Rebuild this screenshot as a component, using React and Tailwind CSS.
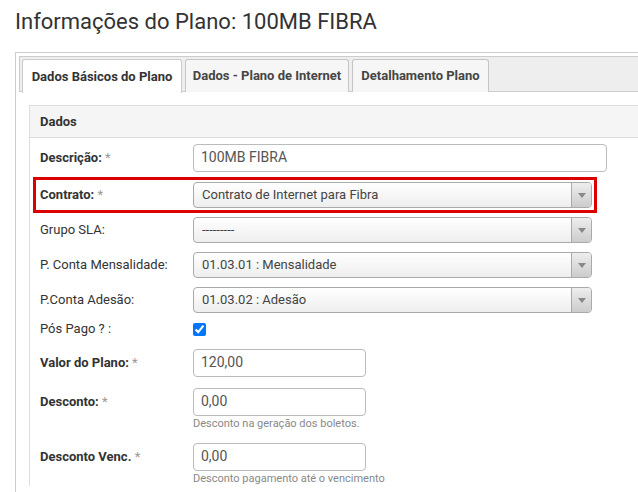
import React from "react";

function Label({ children, bold, req }) {
  return (
    <div className={`w-[153px] shrink-0 text-[13px] text-[#333] ${bold ? "font-bold" : ""}`}>
      {children}
      {req && <span className="font-normal text-[#999]"> *</span>}
    </div>
  );
}

function Select({ value }) {
  return (
    <div className="flex h-[26px] w-[399px] items-stretch overflow-hidden rounded-[4px] border border-[#aaa] bg-gradient-to-b from-white to-[#eee]">
      <div className="flex flex-1 items-center pl-[8px] text-[13px] text-[#444]">{value}</div>
      <div className="flex w-[20px] items-center justify-center border-l border-[#aaa] bg-gradient-to-b from-[#eee] to-[#ccc]">
        <svg width="8" height="5" viewBox="0 0 8 5"><path d="M0 0h8L4 5z" fill="#888" /></svg>
      </div>
    </div>
  );
}

function Input({ value, w }) {
  return (
    <div className={`flex h-[28px] ${w} items-center rounded-[4px] border border-[#bbb] bg-white pl-[7px] text-[14px] text-[#555]`}>
      {value}
    </div>
  );
}

export default function App() {
  return (
    <div className="h-[492px] w-[638px] overflow-hidden bg-white font-['Roboto',sans-serif]">
      <h1 className="pl-[15px] pt-[9px] text-[22px] leading-[26px] text-[#333]">
        Informações do Plano: 100MB FIBRA
      </h1>
      <div className="ml-[15px] mt-[17px] h-[500px] border-l border-t border-[#ccc] pl-[3px] pt-[3px]">
        <div className="flex h-[36px] gap-[3px] border-b border-l border-t border-[#ccc] bg-[#eee] pl-[2px] pt-[2px]">
          <div className="-mb-px flex h-[34px] w-[160px] items-center justify-center rounded-t-[3px] border border-b-0 border-[#ccc] bg-white text-[13px] font-bold text-[#333]">
            Dados Básicos do Plano
          </div>
          <div className="flex h-[33px] w-[164px] items-center justify-center rounded-t-[3px] border border-b-0 border-[#c5c5c5] bg-[#f6f6f6] text-[13px] font-bold text-[#454545]">
            Dados - Plano de Internet
          </div>
          <div className="flex h-[33px] w-[137px] items-center justify-center rounded-t-[3px] border border-b-0 border-[#c5c5c5] bg-[#f6f6f6] text-[13px] font-bold text-[#454545]">
            Detalhamento Plano
          </div>
        </div>
        <div className="pl-[10px] pt-[13px]">
          <div className="border-l border-t border-[#ddd]">
            <div className="flex h-[32px] items-center border-b border-[#ddd] bg-[#f5f5f5] pl-[10px] text-[13px] font-bold text-[#333]">
              Dados
            </div>
            <div className="pl-[10px] pt-[5px]">
              <div className="flex h-[29px] items-center">
                <Label bold req>Descrição:</Label>
                <Input value="100MB FIBRA" w="w-[414px]" />
              </div>
              <div className="relative mt-[10px] flex h-[26px] items-center">
                <div className="absolute left-[-7px] top-[-5px] h-[36px] w-[564px] border-[3px] border-[#dd0000]" />
                <Label bold req>Contrato:</Label>
                <Select value="Contrato de Internet para Fibra" />
              </div>
              <div className="mt-[9px] flex h-[26px] items-center">
                <Label>Grupo SLA:</Label>
                <Select value="---------" />
              </div>
              <div className="mt-[9px] flex h-[26px] items-center">
                <Label>P. Conta Mensalidade:</Label>
                <Select value="01.03.01 : Mensalidade" />
              </div>
              <div className="mt-[9px] flex h-[26px] items-center">
                <Label>P.Conta Adesão:</Label>
                <Select value="01.03.02 : Adesão" />
              </div>
              <div className="mt-[9px] flex h-[14px] items-center">
                <Label>Pós Pago ? :</Label>
                <input type="checkbox" checked readOnly className="m-0 h-[13px] w-[13px] accent-[#0075ff]" />
              </div>
              <div className="mt-[12px] flex h-[29px] items-center">
                <Label bold req>Valor do Plano:</Label>
                <Input value="120,00" w="w-[173px]" />
              </div>
              <div className="mt-[10px] flex h-[29px] items-center">
                <Label bold req>Desconto:</Label>
                <Input value="0,00" w="w-[173px]" />
              </div>
              <div className="pl-[153px] pt-[1px] text-[11px] leading-[14px] text-[#888]">Desconto na geração dos boletos.</div>
              <div className="mt-[11px] flex h-[29px] items-center">
                <Label bold req>Desconto Venc.</Label>
                <Input value="0,00" w="w-[173px]" />
              </div>
              <div className="pl-[153px] pt-[1px] text-[11px] leading-[14px] text-[#888]">Desconto pagamento até o vencimento</div>
            </div>
          </div>
        </div>
      </div>
    </div>
  );
}
